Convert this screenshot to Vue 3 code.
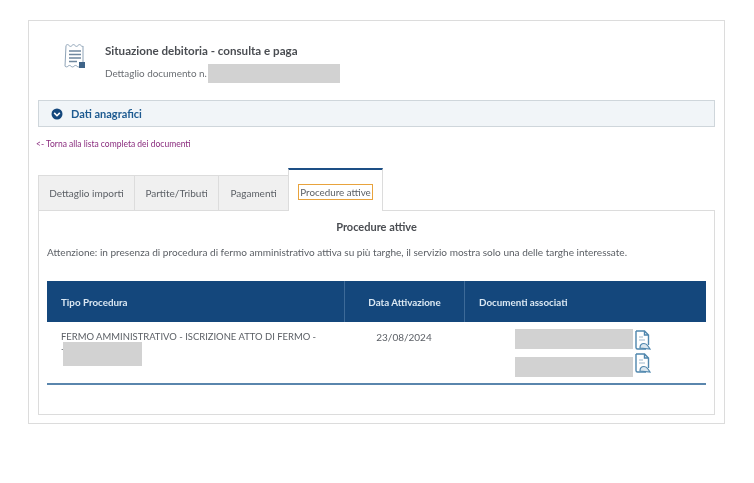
<script setup>
const tabs = [
  { label: 'Dettaglio importi', w: 96 },
  { label: 'Partite/Tributi', w: 84 },
  { label: 'Pagamenti', w: 70 }
]
const docs = [1, 2]
</script>

<template>
  <div class="page">
    <div class="card">
      <header class="head">
        <svg class="doc-icon" width="24" height="30" viewBox="0 0 24 30">
          <path d="M3 3.500c1-1.200 2-1.200 3 0s2 1.200 3 0 2-1.200 3 0 2 1.200 3 0 2-1.200 3 0 1.500 1 2 .5v20c-1-.8-2-.8-3 .2s-2 1-3 0-2-1-3 0-2 1-3 0-2-1-3 0-2 .8-3 0z" fill="#fff" stroke="#8ea3b7" stroke-width="1"/>
          <path d="M6 9h12M6 12.500h12M6 16h12M6 19.500h8" stroke="#6f879e" stroke-width="1.500" fill="none"/>
          <rect x="16" y="20" width="6" height="6" fill="#3f6488"/>
        </svg>
        <div class="head-text">
          <div class="title">Situazione debitoria - consulta e paga</div>
          <div class="sub">Dettaglio documento n.<span class="mask sub-mask"></span></div>
        </div>
      </header>

      <div class="accordion">
        <svg width="12" height="12" viewBox="0 0 12 12">
          <circle cx="6" cy="6" r="5.500" fill="#14477c"/>
          <path d="M3.200 4.900 6 7.700l2.800-2.800" stroke="#fff" stroke-width="1.600" fill="none"/>
        </svg>
        <span>Dati anagrafici</span>
      </div>

      <a class="back">&lt;- Torna alla lista completa dei documenti</a>

      <div class="tabs">
        <div v-for="t in tabs" :key="t.label" class="tab" :style="{ width: t.w + 'px' }">{{ t.label }}</div>
        <div class="tab active"><span class="focus">Procedure attive</span></div>
      </div>

      <section class="panel">
        <h2>Procedure attive</h2>
        <p class="note">Attenzione: in presenza di procedura di fermo amministrativo attiva su più targhe, il servizio mostra solo una delle targhe interessate.</p>
        <div class="table">
          <div class="row thead">
            <div class="c1">Tipo Procedura</div>
            <div class="c2">Data Attivazione</div>
            <div class="c3">Documenti associati</div>
          </div>
          <div class="row tbody">
            <div class="c1">
              FERMO AMMINISTRATIVO - ISCRIZIONE ATTO DI FERMO -
              <div class="dash">-<span class="mask row-mask"></span></div>
            </div>
            <div class="c2">23/08/2024</div>
            <div class="c3 docs">
              <div v-for="d in docs" :key="d" class="doc">
                <span class="mask doc-mask"></span>
                <svg width="17" height="21" viewBox="0 0 17 21">
                  <path d="M2 1h8.500l4 4v10M10.500 1v4h4M12 19H3.500A1.500 1.500 0 0 1 2 17.500V1" fill="#fff" stroke="#4f86ad" stroke-width="1.400"/>
                  <path d="M5 7h4M5 10h6" stroke="#9db8cc" stroke-width="1.200"/>
                  <path d="M6 18c0-3 2-4.500 4-4.500s3 1 4 2.500l2 3z" fill="#dbe7ef" stroke="#4f86ad" stroke-width="1.200"/>
                </svg>
              </div>
            </div>
          </div>
        </div>
      </section>
    </div>
  </div>
</template>

<style scoped>
.page {
  width: 754px;
  height: 483px;
  box-sizing: border-box;
  padding: 20px 0 0 28px;
  background: #fff;
  font-family: Lato, "Open Sans", sans-serif;
  color: #5c6066;
  filter: blur(0.4px);
  overflow: hidden;
}
.card {
  width: 697px;
  height: 404px;
  box-sizing: border-box;
  border: 1px solid #dcdcdc;
  padding: 0 9px;
}
.head {
  display: flex;
  height: 79px;
  padding: 20px 0 0 25px;
  box-sizing: border-box;
}
.doc-icon { margin-top: 1px; }
.head-text { margin-left: 18px; }
.title {
  font-size: 11.600px;
  font-weight: 700;
  line-height: 20px;
  color: #4a4d52;
}
.sub {
  display: flex;
  font-size: 9.900px;
  line-height: 19px;
  margin-top: 3px;
  color: #6a6e73;
}
.mask { display: block; background: #d2d2d2; }
.sub-mask { width: 132px; height: 19px; margin-left: 1px; }
.accordion {
  width: 677px;
  height: 27px;
  box-sizing: border-box;
  border: 1px solid #cfd6db;
  background: #f1f5f8;
  display: flex;
  align-items: center;
  padding-left: 12px;
  gap: 8px;
  font-size: 11px;
  font-weight: 700;
  color: #1d5a90;
}
.back {
  display: block;
  margin: 11px 0 0 -2px;
  height: 13px;
  font-size: 8.500px;
  line-height: 13px;
  color: #8a2c7e;
}
.tabs {
  display: flex;
  align-items: flex-end;
  height: 42px;
  margin-top: 17px;
}
.tab {
  height: 35px;
  box-sizing: border-box;
  background: #f0f0f0;
  border: 1px solid #dcdcdc;
  border-right-width: 0;
  border-bottom: 0;
  display: flex;
  align-items: center;
  justify-content: center;
  font-size: 10px;
  color: #5c6066;
}
.tab.active {
  width: 95px;
  height: 43px;
  margin-bottom: -1px;
  padding-top: 3px;
  background: #fff;
  border: 1px solid #dcdcdc;
  border-top: 2px solid #1d4f85;
  border-bottom: 0;
  position: relative;
}
.focus {
  border: 1px solid #e8a33d;
  padding: 0 1px;
  line-height: 14px;
  font-size: 9.800px;
  white-space: nowrap;
}
.panel {
  width: 677px;
  height: 205px;
  box-sizing: border-box;
  border: 1px solid #dcdcdc;
  padding: 0 8px;
}
h2 {
  margin: 8px 0 0;
  text-align: center;
  font-size: 11px;
  font-weight: 700;
  line-height: 16px;
  color: #4a4d52;
}
.note {
  margin: 10px 0 0;
  font-size: 10.050px;
  line-height: 14px;
  white-space: nowrap;
  color: #5c6066;
}
.table { margin-top: 22px; width: 659px; }
.row { display: grid; grid-template-columns: 297px 120px 1fr; }
.thead {
  height: 41px;
  background: #14477c;
  color: #dbe8f3;
  font-size: 9.800px;
  font-weight: 700;
  align-items: center;
}
.thead .c1 { padding-left: 14px; }
.thead .c2, .thead .c3 { height: 100%; display: flex; align-items: center; border-left: 1px solid #3d6a98; }
.thead .c2 { justify-content: center; }
.thead .c3 { padding-left: 14px; }
.tbody {
  height: 61px;
  border-bottom: 2px solid #5a86ad;
  font-size: 10px;
  line-height: 12px;
  color: #5c6066;
}
.tbody .c1 { padding: 9px 0 0 14px; font-size: 9.450px; }
.tbody .c2 { padding-top: 9px; text-align: center; }
.dash { position: relative; height: 12px; }
.row-mask {
  position: absolute;
  left: 2px;
  top: -1px;
  width: 79px;
  height: 24px;
}
.docs { padding: 7px 0 0 51px; display: flex; flex-direction: column; gap: 8px; }
.doc { display: flex; align-items: flex-start; height: 20px; }
.doc-mask { width: 118px; height: 20px; margin-right: 1px; }
.doc svg { margin-top: 1px; flex: none; }
.doc:nth-child(2) svg { margin-top: -4px; }
</style>
